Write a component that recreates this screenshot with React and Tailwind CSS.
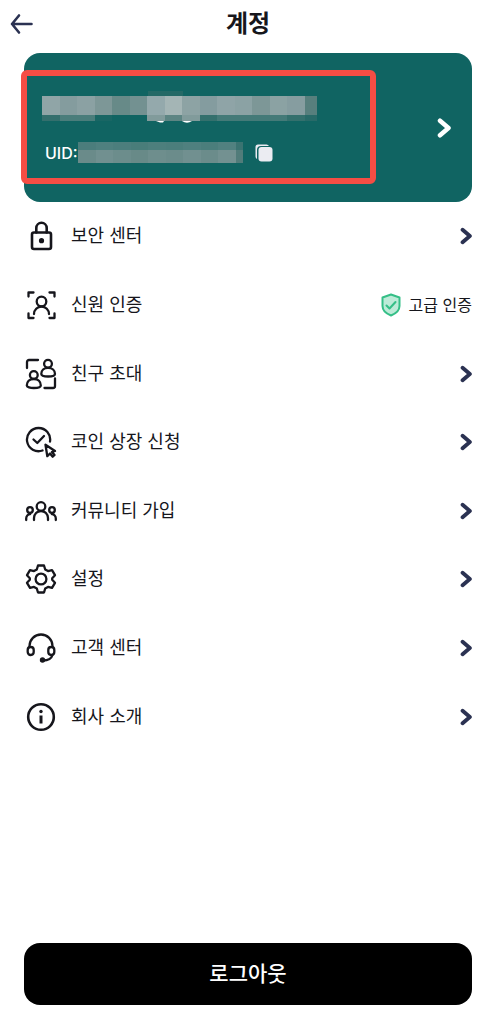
import React from "react";

const ink = "#16161c";

function Icon({ children }) {
  return (
    <svg
      width="32"
      height="32"
      viewBox="0 0 32 32"
      fill="none"
      stroke={ink}
      strokeWidth="2.3"
      strokeLinecap="round"
      strokeLinejoin="round"
      aria-hidden="true"
    >
      {children}
    </svg>
  );
}

const LockIcon = () => (
  <Icon>
    <rect x="7" y="12.500" width="19" height="16.500" rx="2" strokeWidth="2.600" />
    <path d="M11.300 12.500V8a5.200 5.200 0 0 1 10.400 0v4.500" strokeWidth="2.600" />
    <circle cx="16.500" cy="20.700" r="2.600" fill={ink} stroke="none" />
  </Icon>
);

const IdentityIcon = () => (
  <Icon>
    <path d="M3.500 7.500v-4h5M24.500 3.500h5v4M3.500 24.500v4.500h5M29.500 24.500v4.500h-5" />
    <circle cx="16.500" cy="12.500" r="4.800" />
    <path d="M9 25a7.500 7.500 0 0 1 15 0" />
  </Icon>
);

const InviteIcon = () => (
  <Icon>
    <path d="M2 10V4a2 2 0 0 1 2-2h9M30 20.500V28a2 2 0 0 1-2 2h-8.500" />
    <circle cx="23" cy="5.800" r="3.900" />
    <path d="M16.300 16c0-3.500 2.500-6.200 6.700-6.200s7 2.700 7 6.200c0 3.300-13.700 3.300-13.700 0z" />
    <circle cx="8.800" cy="17" r="3.900" />
    <path d="M1.800 27.500c0-3.700 2.500-6.500 7-6.500s7 2.800 7 6.500c0 3.300-14 3.300-14 0z" />
  </Icon>
);

const ListingIcon = () => (
  <Icon>
    <path d="M17.500 24.500A11.600 11.600 0 1 1 25 15.500" />
    <path d="M8.500 13.500l3.800 3.500 6.700-7" />
    <path d="M20.500 18.700l1.800 11.500 2.700-2.700 2.700 3.200 1.800-1.700-2.500-3 3-1z" />
  </Icon>
);

const CommunityIcon = () => (
  <Icon>
    <circle cx="16" cy="11.500" r="4.300" />
    <path d="M9 25v-2a7 7 0 0 1 14 0v2" />
    <circle cx="5" cy="15" r="2.800" />
    <path d="M1.200 25v-1.500a4.500 4.500 0 0 1 4-4.500M30.800 25v-1.500a4.500 4.500 0 0 0-4-4.500" />
    <circle cx="27" cy="15" r="2.800" />
  </Icon>
);

const SettingsIcon = () => (
  <Icon>
    <path d="M13 2.500h6l1.200 4 2.800 1.600 4-1 3 5.100-2.800 3v1.600l2.800 3-3 5.100-4-1-2.800 1.600-1.200 4h-6l-1.200-4L9 23.900l-4 1-3-5.100 2.800-3v-1.600l-2.800-3 3-5.100 4 1 2.800-1.600z" />
    <circle cx="16" cy="16" r="5.400" />
  </Icon>
);

const SupportIcon = () => (
  <Icon>
    <path d="M4.500 15v-1a11.500 11.500 0 0 1 23 0v1" />
    <rect x="2.700" y="15" width="6" height="8" rx="2.900" />
    <rect x="23.300" y="15" width="6" height="8" rx="2.900" />
    <path d="M27.500 23c-1 3.500-4.500 5.500-9.500 5.500" />
    <circle cx="17.500" cy="28" r="2.700" fill={ink} stroke="none" />
  </Icon>
);

const InfoIcon = () => (
  <Icon>
    <circle cx="16" cy="16" r="12.800" strokeWidth="2.600" />
    <path d="M16 14.500v8" strokeWidth="3" strokeLinecap="butt" />
    <circle cx="16" cy="10.500" r="1.700" fill={ink} stroke="none" />
  </Icon>
);

const Chevron = ({ className }) => (
  <svg
    viewBox="0 0 14 20"
    fill="none"
    stroke="currentColor"
    strokeWidth="4.500"
    strokeLinecap="round"
    strokeLinejoin="round"
    className={className}
    aria-hidden="true"
  >
    <path d="M3 2.700l8.500 7.300L3 17.300" />
  </svg>
);

const ShieldIcon = () => (
  <svg width="20" height="24" viewBox="0 0 20 24" fill="none" stroke="#35bf87" strokeWidth="2" strokeLinejoin="round" strokeLinecap="round" aria-hidden="true">
    <path d="M10 1.500l8.500 3V13c0 4-3.500 7.500-8.500 9.500C5 20.500 1.500 17 1.500 13V4.500z" fill="#bdebd8" />
    <path d="M5.500 12.500l3 3 6-6.500" />
  </svg>
);

const CopyIcon = () => (
  <svg width="18" height="18" viewBox="0 0 18 18" fill="#ebecf2" aria-hidden="true">
    <path d="M3 .5h8.500a3 3 0 0 1 2.500 1.500H6a4 4 0 0 0-4 4v9A3 3 0 0 1 .5 12.500V3A2.500 2.500 0 0 1 3 .5z" />
    <rect x="3.500" y="3" width="14" height="14.500" rx="3" />
  </svg>
);

// [upper colour, lower strip colour] for every block of the masked account name
const nameBlocks = [
  ["#90a5a7", "#346f6d"],
  ["#849c9e", "#4a7d7b"],
  ["#8ba1a3", "#4a7d7b"],
  ["#7d9797", "#196664"],
  ["#678a88", "#106462"],
  ["#739191", "#106462"],
  ["#94a9ac", "#819b9b"],
  ["#a4b5b5", "#5d8583"],
  ["#8da3a4", "#819b9b"],
  ["#849c9f", "#34706d"],
  ["#8fa4a7", "#447a78"],
  ["#8ba2a4", "#447a78"],
  ["#7d9797", "#447a78"],
  ["#8ba2a3", "#447a78"],
  ["#869da0", "#34706d"],
  ["#577f7d", "#286a68"],
];

const uidBlocks = ["#6a8b8a", "#719090", "#6c8d8c", "#688a88", "#6e8e8d", "#6b8c8b", "#719090", "#6b8c8b", "#739191", "#517c7a"];

const NameMask = () => (
  <svg width="275" height="32" viewBox="0 0 275 32" shapeRendering="crispEdges" aria-hidden="true">
    <rect x="106" y="0" width="35" height="6" fill="#246966" />
    {nameBlocks.map(([top, bottom], i) => (
      <g key={i}>
        <rect x={i * 17.5} y="5" width="18" height="19" fill={top} />
        <rect x={i * 17.5} y="24" width="18" height="6" fill={bottom} />
      </g>
    ))}
    <g fill="#fff" shapeRendering="auto">
      <path d="M114 30h8l-1 1.500h-3z" />
      <path d="M140 30h10q-5 3.500-10 0z" />
    </g>
  </svg>
);

const UidMask = () => (
  <svg width="165" height="21" viewBox="0 0 165 21" shapeRendering="crispEdges" aria-hidden="true">
    {uidBlocks.map((color, i) => (
      <rect key={i} x={i * 17.5} y="0" width="18" height="21" fill={color} />
    ))}
    <rect width="165" height="8" fill="#106462" opacity="0.35" />
  </svg>
);

const menu = [
  { label: "보안 센터", icon: LockIcon },
  { label: "신원 인증", icon: IdentityIcon, badge: "고급 인증" },
  { label: "친구 초대", icon: InviteIcon },
  { label: "코인 상장 신청", icon: ListingIcon },
  { label: "커뮤니티 가입", icon: CommunityIcon },
  { label: "설정", icon: SettingsIcon },
  { label: "고객 센터", icon: SupportIcon },
  { label: "회사 소개", icon: InfoIcon },
];

function App() {
  return (
    <div className="flex min-h-screen flex-col bg-white pb-1 font-['Inter','Noto_Sans_CJK_KR',sans-serif] text-[#16161c]">
      <header className="grid h-[53px] grid-cols-[1fr_auto_1fr] items-center pr-0.5 pb-1.5 pl-2.5">
        <button aria-label="뒤로" className="justify-self-start text-[#2b3252]">
          <svg width="24" height="22" viewBox="0 0 24 22" fill="none" stroke="currentColor" strokeWidth="2.600" strokeLinecap="round" strokeLinejoin="round" aria-hidden="true">
            <path d="M21.500 11H2M9 2.500L2 11l7 8.500" />
          </svg>
        </button>
        <h1 className="text-2xl font-semibold">계정</h1>
      </header>

      <main className="flex grow flex-col pr-4 pl-6">
        <section className="relative flex h-[149px] items-center justify-between rounded-2xl bg-[#106462] pr-5 pl-[18px] text-white">
          <div className="flex flex-col gap-4">
            <NameMask />
            <div className="flex items-center pt-0.5 pl-[3px]">
              <span className="w-[33px] text-base font-medium">UID:</span>
              <UidMask />
              <button aria-label="UID 복사" className="ml-3">
                <CopyIcon />
              </button>
            </div>
          </div>
          <a href="#profile" aria-label="프로필">
            <Chevron className="h-5 w-4" />
          </a>
          <div className="pointer-events-none absolute top-[17px] -left-[3px] h-[114px] w-[355px] rounded-md border-6 border-[#f54d44]" />
        </section>

        <nav>
          <ul className="grid h-[549px] auto-rows-fr">
            {menu.map(({ label, icon: MenuIcon, badge }) => (
              <li key={label}>
                <a href="#menu" className="flex h-full items-center pl-px">
                  <MenuIcon />
                  <span className="ml-3.5 text-lg">{label}</span>
                  {badge ? (
                    <span className="ml-auto flex items-center gap-2 text-base">
                      <ShieldIcon />
                      {badge}
                    </span>
                  ) : (
                    <Chevron className="ml-auto h-[18px] w-3 text-[#2b3252]" />
                  )}
                </a>
              </li>
            ))}
          </ul>
        </nav>

        <button className="mt-auto h-[62px] rounded-2xl bg-black text-[21px] font-medium text-white">
          로그아웃
        </button>
      </main>
    </div>
  );
}

export default App;
